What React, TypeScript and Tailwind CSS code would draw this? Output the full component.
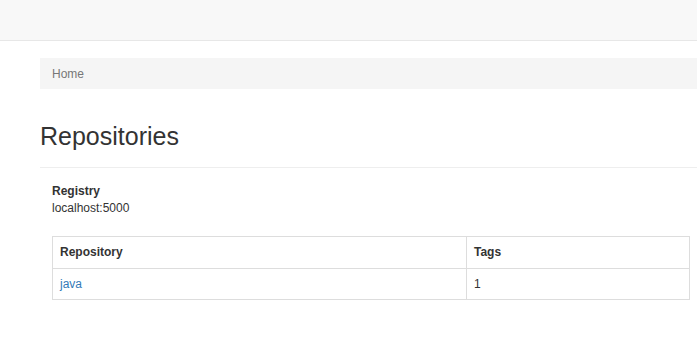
export default function App() {
  return (
    <div className="min-h-[345px] bg-white text-[#333] text-[12px]" style={{ fontFamily: '"Liberation Sans", Arial, sans-serif' }}>
      <nav className="h-[41px] bg-[#f8f8f8] border-b border-[#e7e7e7]" />
      <div className="pl-[40px]">
        <div className="mt-[17px] h-[31px] bg-[#f5f5f5] px-3 flex items-center text-[#777] text-[12px]">Home</div>
        <h1 className="mt-[32px] text-[25px] leading-[30px] text-[#333] font-normal">Repositories</h1>
        <hr className="mt-[16px] border-0 border-t border-[#eee]" />
        <div className="pl-3 pr-[7px]">
          <div className="mt-[15px] leading-[17px]">
            <div className="font-bold">Registry</div>
            <div>localhost:5000</div>
          </div>
          <table className="mt-[19px] w-full border-collapse border border-[#ddd]">
            <thead>
              <tr className="h-[32px]">
                <th className="w-[414px] text-left font-bold pl-[7px] pr-2 pb-px border border-[#ddd]">Repository</th>
                <th className="text-left font-bold pl-[7px] pr-2 pb-px border border-[#ddd]">Tags</th>
              </tr>
            </thead>
            <tbody>
              <tr className="h-[31px]">
                <td className="pl-[7px] pr-2 border border-[#ddd]"><a className="text-[#337ab7]" href="#">java</a></td>
                <td className="pl-[7px] pr-2 border border-[#ddd]">1</td>
              </tr>
            </tbody>
          </table>
        </div>
      </div>
    </div>
  );
}
